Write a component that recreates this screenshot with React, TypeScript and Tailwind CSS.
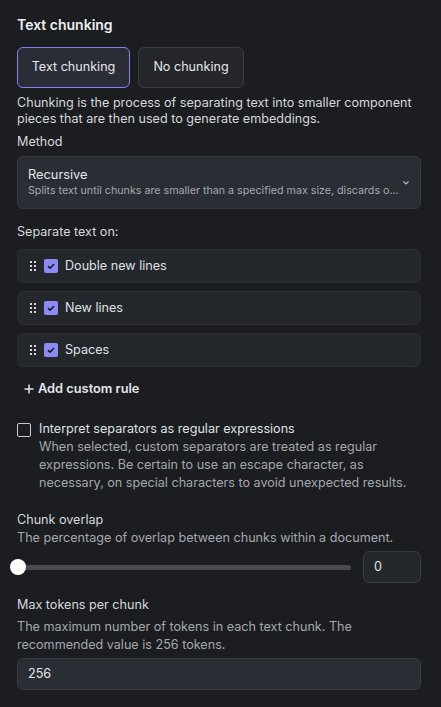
import { useState } from 'react'

const rules = ['Double new lines', 'New lines', 'Spaces']

function DragHandle() {
  return (
    <svg width="6" height="10" viewBox="0 0 6 10" className="shrink-0">
      {[0, 4, 8].map((y) => (
        <g key={y}>
          <rect x="0" y={y} width="2" height="2" fill="#d4d6da" />
          <rect x="4" y={y} width="2" height="2" fill="#d4d6da" />
        </g>
      ))}
    </svg>
  )
}

function CheckedBox() {
  return (
    <span className="flex h-[14px] w-[14px] shrink-0 items-center justify-center rounded-[2px] bg-[#8b8cf3]">
      <svg width="10" height="10" viewBox="0 0 10 10">
        <path d="M2 5.2 L4.1 7.2 L8 3" fill="none" stroke="#16171c" strokeWidth="1.6" />
      </svg>
    </span>
  )
}

export default function App() {
  const [mode, setMode] = useState('text')

  return (
    <div
      className="min-h-[707px] w-[441px] bg-[#1b1d21] pl-[17px] pr-[20px] pt-[16px] text-[12.6px] text-[#d6d8dc]"
      style={{ fontFamily: 'Inter, "Noto Sans", sans-serif' }}
    >
      <h2 className="text-[14px] font-semibold leading-[18px] text-[#eceef1]">Text chunking</h2>

      <div className="mt-[13px] flex gap-2">
        <button
          onClick={() => setMode('text')}
          className={
            mode === 'text'
              ? 'h-[41px] w-[113px] rounded-[6px] border border-[#8185f0] bg-[#2a2d36] text-[12.6px] text-[#e4e6ea]'
              : 'h-[41px] w-[113px] rounded-[6px] border border-[#3a3d43] bg-[#24262b] text-[12.6px] text-[#e4e6ea]'
          }
        >
          Text chunking
        </button>
        <button
          onClick={() => setMode('none')}
          className={
            mode === 'none'
              ? 'h-[41px] w-[106px] rounded-[6px] border border-[#8185f0] bg-[#2a2d36] text-[12.6px] text-[#e4e6ea]'
              : 'h-[41px] w-[106px] rounded-[6px] border border-[#3a3d43] bg-[#24262b] text-[12.6px] text-[#e4e6ea]'
          }
        >
          No chunking
        </button>
      </div>

      <p className="mt-[7px] leading-[16px] text-[#d6d8dc]">
        Chunking is the process of separating text into smaller component pieces that are then used to generate embeddings.
      </p>

      <div className="mt-[6px] leading-[18px]">Method</div>
      <div className="mt-[5px] flex h-[53px] items-center rounded-[6px] border border-[#373a41] bg-[#2a2d34] pl-[10px] pr-[10px]">
        <div className="min-w-0 flex-1">
          <div className="text-[12.8px] leading-[17px] text-[#e4e6ea]">Recursive</div>
          <div className="overflow-hidden whitespace-nowrap text-[10.7px] leading-[16px] text-[#a5a8ae]">
            Splits text until chunks are smaller than a specified max size, discards o...
          </div>
        </div>
        <svg width="8" height="6" viewBox="0 0 8 6" className="ml-1 shrink-0">
          <path d="M1.5 1.5 L4 4 L6.5 1.5" fill="none" stroke="#b5b8be" strokeWidth="1.2" />
        </svg>
      </div>

      <div className="mt-[14px] leading-[18px]">Separate text on:</div>
      <div className="mt-[8px] flex flex-col gap-2">
        {rules.map((r) => (
          <div
            key={r}
            className="flex h-[34px] items-center rounded-[6px] border border-[#2b2e33] bg-[#24272c] pl-[12px]"
          >
            <DragHandle />
            <span className="ml-[8px]">
              <CheckedBox />
            </span>
            <span className="ml-[7px] text-[#dfe1e5]">{r}</span>
          </div>
        ))}
      </div>

      <button className="mt-[12px] flex items-center gap-[4px] pl-[7px] text-[12.8px] font-semibold text-[#e4e6ea]">
        <svg width="10" height="10" viewBox="0 0 10 10">
          <path d="M5 0.5 V9.5 M0.5 5 H9.5" stroke="#e4e6ea" strokeWidth="1.5" />
        </svg>
        Add custom rule
      </button>

      <div className="mt-[22px] flex gap-[8px]">
        <span className="mt-[3px] h-[14px] w-[14px] shrink-0 rounded-[2px] border border-[#c9ccd1]" />
        <div>
          <div className="leading-[18px] text-[#dfe1e5]">Interpret separators as regular expressions</div>
          <p className="leading-[18px] text-[#a5a8ae]">
            When selected, custom separators are treated as regular expressions. Be certain to use an escape character, as necessary, on special characters to avoid unexpected results.
          </p>
        </div>
      </div>

      <div className="mt-[19px] leading-[18px]">Chunk overlap</div>
      <div className="leading-[17px] text-[#a5a8ae]">The percentage of overlap between chunks within a document.</div>
      <div className="mt-[5px] flex items-center">
        <div className="relative -ml-[7px] flex h-[16px] w-[341px] items-center">
          <div className="ml-[7px] h-[5px] flex-1 rounded-full bg-[#474a52]" />
          <div className="absolute left-0 top-0 h-[16px] w-[16px] rounded-full bg-white" />
        </div>
        <div className="ml-auto flex h-[32px] w-[58px] items-center rounded-[6px] border border-[#373a41] bg-[#24272c] pl-[10px] text-[#e4e6ea]">
          0
        </div>
      </div>

      <div className="mt-[13px] leading-[18px]">Max tokens per chunk</div>
      <p className="mt-[4px] leading-[18px] text-[#a5a8ae]">
        The maximum number of tokens in each text chunk. The recommended value is 256 tokens.
      </p>
      <div className="mt-[4px] flex h-[32px] items-center rounded-[6px] border border-[#373a41] bg-[#2a2d34] pl-[10px] text-[#e4e6ea]">
        256
      </div>
    </div>
  )
}
